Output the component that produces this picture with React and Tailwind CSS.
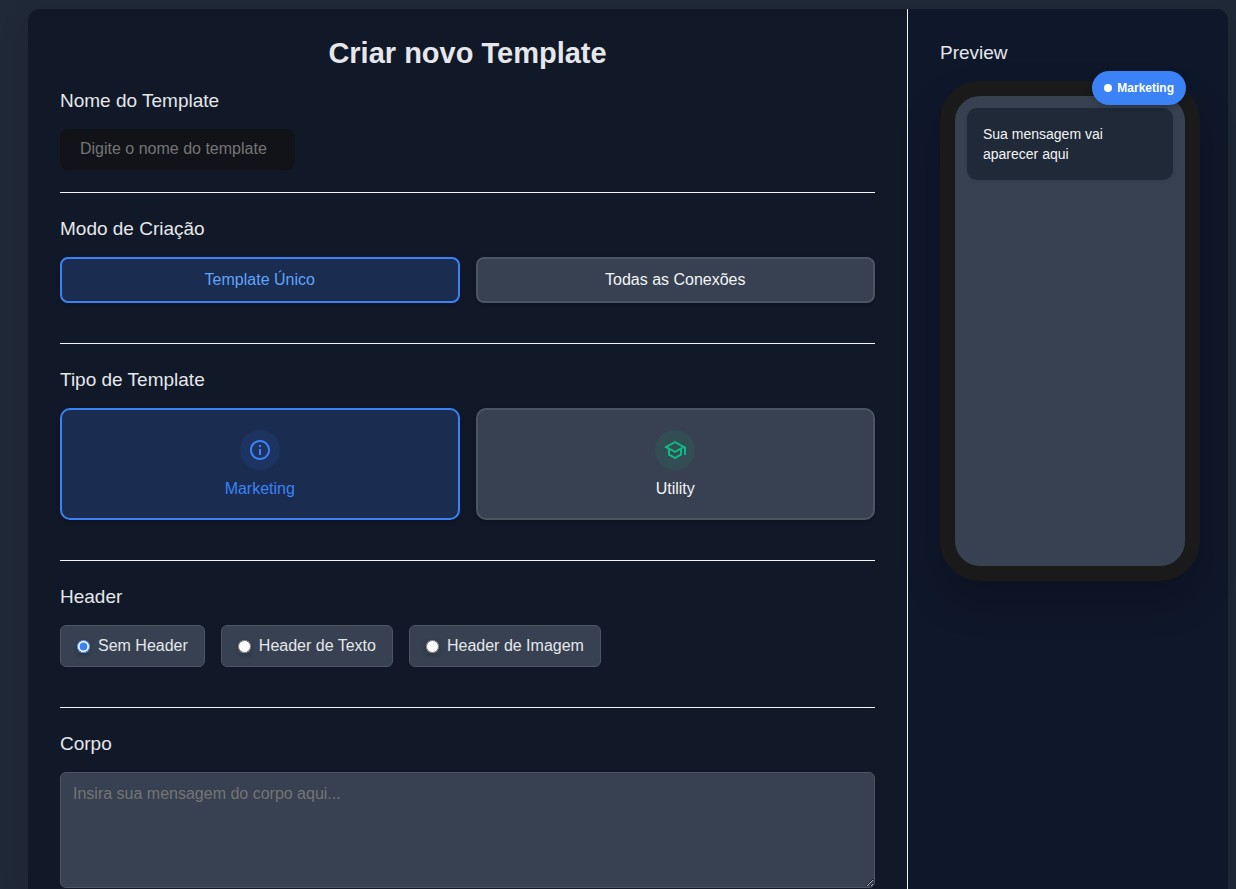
import { useState } from "react";

function InfoIcon() {
  return (
    <svg viewBox="0 0 24 24" className="size-6" fill="currentColor" aria-hidden="true">
      <path d="M11 7h2v2h-2zm0 4h2v6h-2zm1-9C6.48 2 2 6.48 2 12s4.48 10 10 10 10-4.48 10-10S17.52 2 12 2m0 18c-4.41 0-8-3.59-8-8s3.59-8 8-8 8 3.59 8 8-3.59 8-8 8" />
    </svg>
  );
}

function SchoolIcon() {
  return (
    <svg viewBox="0 0 24 24" className="size-6" fill="currentColor" aria-hidden="true">
      <path d="M12 3 1 9l4 2.18v6L12 21l7-3.82v-6l2-1.09V17h2V9zm6.82 6L12 12.72 5.18 9 12 5.28zM17 15.99l-5 2.73-5-2.73v-3.72L12 15l5-2.73z" />
    </svg>
  );
}

function Section({ title, id, children }) {
  return (
    <section className="flex flex-col gap-4 border-t border-[#f3f4f6] pt-6 pb-10 last:pb-0">
      <h2 id={id} className="text-[19px] leading-6">{title}</h2>
      {children}
    </section>
  );
}

const modes = ["Template Único", "Todas as Conexões"];

const types = [
  { name: "Marketing", Icon: InfoIcon, badge: "bg-[#3b82f6]/10 text-[#3b82f6]" },
  { name: "Utility", Icon: SchoolIcon, badge: "bg-[#10b981]/10 text-[#10b981]" },
];

const headers = ["Sem Header", "Header de Texto", "Header de Imagem"];

export default function App() {
  const [mode, setMode] = useState(modes[0]);
  const [type, setType] = useState("Marketing");
  const [header, setHeader] = useState(headers[0]);
  const [body, setBody] = useState("");

  return (
    <div className="flex min-h-screen bg-[#1f2937] pt-[9px] pr-2 pl-7 font-['Liberation_Sans',Arial,sans-serif] text-base text-[#e5e7eb]">
      <div className="flex grow rounded-t-xl bg-[#111827] shadow-[0_8px_32px_rgba(0,0,0,0.1)]">
        <main className="min-w-0 grow px-8 pt-6">
          <h1 className="mb-4 text-center text-[29px] leading-10 font-bold">Criar novo Template</h1>

          <section className="flex flex-col items-start gap-4 pb-[22px]">
            <label htmlFor="template-name" className="text-[19px] leading-6">Nome do Template</label>
            <input
              id="template-name"
              type="text"
              placeholder="Digite o nome do template"
              className="h-[41px] w-[235px] rounded-lg bg-[#111318] px-5 pb-0.5 placeholder:text-[#757575]"
            />
          </section>

          <Section title="Modo de Criação">
            <div className="grid grid-cols-2 gap-4">
              {modes.map((name) => (
                <button
                  key={name}
                  type="button"
                  aria-pressed={mode === name}
                  onClick={() => setMode(name)}
                  className={`flex h-[46px] items-center justify-center rounded-lg border-2 shadow-[0_2px_4px_rgba(0,0,0,0.2)] ${
                    mode === name
                      ? "border-[#3b82f6] bg-[#1a2c50] text-[#60a5fa]"
                      : "border-[#4b5563] bg-[#374151] text-[#f3f4f6]"
                  }`}
                >
                  {name}
                </button>
              ))}
            </div>
          </Section>

          <Section title="Tipo de Template">
            <div className="grid grid-cols-2 gap-4">
              {types.map(({ name, Icon, badge }) => (
                <button
                  key={name}
                  type="button"
                  aria-pressed={type === name}
                  onClick={() => setType(name)}
                  className={`flex h-28 flex-col items-center gap-2 rounded-[10px] border-2 pt-5 shadow-[0_2px_4px_rgba(0,0,0,0.2)] ${
                    type === name
                      ? "border-[#3b82f6] bg-[#1a2c50] text-[#3b82f6]"
                      : "border-[#4b5563] bg-[#374151] text-[#f3f4f6]"
                  }`}
                >
                  <span className={`flex size-10 items-center justify-center rounded-full ${badge}`}>
                    <Icon />
                  </span>
                  <span className="leading-[22px]">{name}</span>
                </button>
              ))}
            </div>
          </Section>

          <Section title="Header">
            <div className="flex gap-4">
              {headers.map((name) => (
                <label
                  key={name}
                  className="flex h-[42px] items-center gap-2 rounded-md border border-[#4b5563] bg-[#374151] px-4"
                >
                  <input
                    type="radio"
                    name="header"
                    checked={header === name}
                    onChange={() => setHeader(name)}
                    className="size-[13px] rounded-full accent-[#3b82f6] shadow-[0_2px_4px_rgba(0,0,0,0.2)]"
                  />
                  <span className="leading-5">{name}</span>
                </label>
              ))}
            </div>
          </Section>

          <Section title="Corpo" id="body-title">
            <textarea
              aria-labelledby="body-title"
              value={body}
              onChange={(e) => setBody(e.target.value)}
              placeholder="Insira sua mensagem do corpo aqui..."
              className="block h-29 w-full resize rounded-md border border-[#4b5563] bg-[#374151] px-3 py-[9px] leading-6 placeholder:text-[#757575]"
            />
          </Section>
        </main>

        <aside className="w-[321px] shrink-0 rounded-tr-xl border-l border-[#f3f4f6] bg-[#0f172a] pt-8 pl-8">
          <h2 className="mb-4 text-[19px] leading-6">Preview</h2>
          <div className="relative h-[500px] w-[260px] rounded-[40px] border-[15px] border-[#1a1a1a] bg-[#374151] p-3 shadow-[0_20px_40px_rgba(0,0,0,0.2)]">
            <p className="rounded-[10px] bg-[#1f2937] p-4 text-sm leading-5 text-[#f3f4f6] shadow-[0_1px_4px_rgba(0,0,0,0.1)]">
              {body || "Sua mensagem vai aparecer aqui"}
            </p>
            <span className="absolute -top-[25px] -right-px flex h-[34px] items-center gap-[5px] rounded-full bg-[#3b82f6] px-3 text-xs font-bold text-white shadow-[0_2px_6px_rgba(0,0,0,0.2)]">
              <span className="size-2 rounded-full bg-white" />
              {type}
            </span>
          </div>
        </aside>
      </div>
    </div>
  );
}
